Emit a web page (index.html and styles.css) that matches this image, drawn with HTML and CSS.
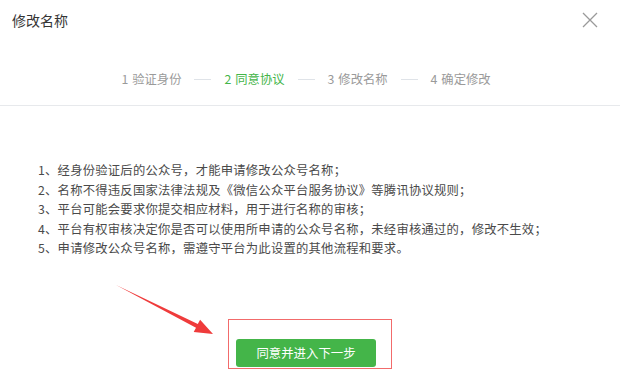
FILE: index.html
```html
<!DOCTYPE html>
<html lang="zh-CN">
<head>
<meta charset="utf-8">
<title>修改名称</title>
<link rel="stylesheet" href="styles.css">
</head>
<body>
<div class="dialog">
  <div class="header">
    <span class="title">修改名称</span>
    <svg class="close" width="16" height="16" viewBox="0 0 16 16"><path d="M1 1L15 15M15 1L1 15" stroke="#9a9a9a" stroke-width="1.3" fill="none"/></svg>
  </div>
  <div class="steps">
    <span class="step"><span class="num">1</span>验证身份</span>
    <span class="dash"></span>
    <span class="step active"><span class="num">2</span>同意协议</span>
    <span class="dash"></span>
    <span class="step"><span class="num">3</span>修改名称</span>
    <span class="dash"></span>
    <span class="step"><span class="num">4</span>确定修改</span>
  </div>
  <ol class="rules">
    <li>1、经身份验证后的公众号，才能申请修改公众号名称；</li>
    <li>2、名称不得违反国家法律法规及《微信公众平台服务协议》等腾讯协议规则；</li>
    <li>3、平台可能会要求你提交相应材料，用于进行名称的审核；</li>
    <li>4、平台有权审核决定你是否可以使用所申请的公众号名称，未经审核通过的，修改不生效；</li>
    <li>5、申请修改公众号名称，需遵守平台为此设置的其他流程和要求。</li>
  </ol>
  <div class="footer">
    <div class="mark">
      <button class="btn">同意并进入下一步</button>
    </div>
  </div>
  <svg class="arrow" width="620" height="375" viewBox="0 0 620 375">
    <polygon points="116,285 197.8,324.1 200.1,319.7 213,334 193.7,332.1 196,327.7" fill="#ef3b3b"/>
  </svg>
</div>
</body>
</html>
```

FILE: styles.css
```css
html, body {
  margin: 0;
  padding: 0;
  background: #fff;
}
body {
  font-family: "Noto Sans CJK SC", "Noto Sans", sans-serif;
  color: #444;
}
.dialog {
  position: relative;
  width: 620px;
  height: 375px;
  overflow: hidden;
}
.header {
  height: 40px;
  padding: 0 22px 0 12px;
  display: flex;
  align-items: center;
  justify-content: space-between;
}
.title {
  font-size: 14px;
  color: #353535;
}
.close {
  display: block;
}
.steps {
  display: flex;
  justify-content: center;
  align-items: center;
  gap: 13px;
  padding: 27px 8px 14px 0;
  line-height: 24px;
  font-size: 12.3px;
  color: #9a9a9a;
  border-bottom: 1px solid #e7e9ec;
}
.num {
  margin-right: 4px;
}
.step.active {
  color: #44b549;
}
.dash {
  width: 17px;
  height: 1px;
  background: #dfe3e8;
}
.rules {
  list-style: none;
  margin: 55px 0 0;
  padding: 0 0 0 38px;
  font-size: 12.3px;
  line-height: 19.5px;
  letter-spacing: 0.25px;
  color: #4a4a4a;
}
.footer {
  display: flex;
  justify-content: center;
  margin-top: 60px;
}
.mark {
  border: 1px solid #f26b6b;
  padding: 19px 15px 1px 7px;
}
.btn {
  display: block;
  width: 140px;
  height: 28px;
  border: 0;
  border-radius: 3px;
  background: #44b549;
  color: #fff;
  font-family: "Noto Sans CJK SC", "Noto Sans", sans-serif;
  font-size: 12.4px;
  padding: 0;
}
.arrow {
  position: absolute;
  left: 0;
  top: 0;
  pointer-events: none;
}
```
